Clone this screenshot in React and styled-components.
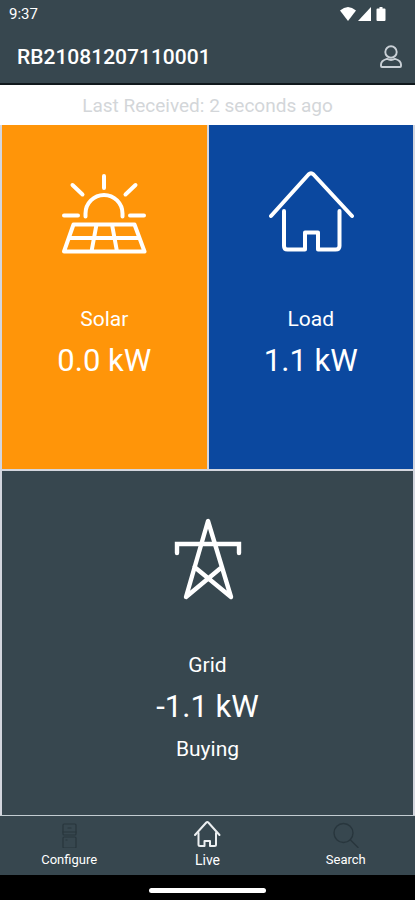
import React from "react";
import styled, { createGlobalStyle } from "styled-components";

const GlobalStyle = createGlobalStyle`
  * {
    box-sizing: border-box;
  }

  body {
    margin: 0;
    background: #ffffff;
    font-family: Roboto, "Liberation Sans", sans-serif;
  }
`;

const Screen = styled.div`
  display: flex;
  flex-direction: column;
  min-height: 100vh;
`;

const StatusBar = styled.div`
  display: flex;
  align-items: center;
  justify-content: space-between;
  height: 27px;
  padding: 0 27px 0 9px;
  background: #37474f;
  color: #ffffff;
  font-size: 15px;
`;

const StatusIcons = styled.div`
  display: flex;
  align-items: center;
  gap: 2px;
`;

const Header = styled.header`
  display: flex;
  align-items: center;
  justify-content: space-between;
  height: 58px;
  padding: 3px 12px 0 17px;
  border-bottom: 2px solid #10181c;
  background: #37474f;
`;

const Title = styled.h1`
  margin: 0;
  color: #ffffff;
  font-size: 21px;
  font-weight: 500;
  line-height: 28px;
`;

const IconButton = styled.button`
  display: flex;
  padding: 0;
  border: none;
  background: none;
  color: #c9d0d6;
  cursor: pointer;
`;

const LastReceived = styled.p`
  margin: 0;
  padding-top: 2px;
  color: #d3d6d9;
  font-size: 19px;
  line-height: 38px;
  text-align: center;
`;

const Tiles = styled.main`
  display: grid;
  flex: 1;
  grid-template-columns: 1fr 1fr;
  grid-template-rows: 1fr 1fr;
  gap: 2px;
  padding: 0 2px;
  background: #d3d6de;
`;

const TileBox = styled.section`
  display: flex;
  flex-direction: column;
  align-items: center;
  grid-column: ${(props) => (props.$wide ? "1 / -1" : "auto")};
  padding: 46px 0 32px;
  background: ${(props) => props.$color};
  color: #ffffff;
`;

const TileLabel = styled.h2`
  margin: 46px 0 0;
  font-size: 21px;
  font-weight: 400;
  line-height: 32px;
`;

const TileValue = styled.div`
  font-size: 31px;
  line-height: 52px;
`;

const TileNote = styled.div`
  font-size: 21px;
  line-height: 32px;
`;

const TabBar = styled.nav`
  display: grid;
  grid-template-columns: repeat(3, 1fr);
  height: 60px;
  border-top: 1px solid #c3cdd2;
  background: #37474f;
`;

const Tab = styled.a`
  display: flex;
  flex-direction: column;
  align-items: center;
  gap: 2px;
  padding-top: 4px;
  color: #ffffff;
  font-size: ${(props) => (props.$active ? "14px" : "13px")};
  line-height: 20px;
  text-decoration: none;

  svg {
    color: ${(props) => (props.$active ? "#eceff1" : "#28363d")};
  }
`;

const GestureBar = styled.div`
  display: flex;
  align-items: center;
  justify-content: center;
  height: 25px;
  padding-top: 5px;
  background: #000000;
`;

const GestureHandle = styled.div`
  width: 28%;
  height: 5px;
  border-radius: 3px;
  background: #ffffff;
`;

const Drawing = ({ size, box, stroke, children }) => (
  <svg
    width={size}
    height={size}
    viewBox={`0 0 ${box} ${box}`}
    fill="none"
    stroke="currentColor"
    strokeWidth={stroke}
    strokeLinecap="round"
    strokeLinejoin="round"
    aria-hidden="true"
  >
    {children}
  </svg>
);

const SolarIcon = () => (
  <Drawing size={86} box={86} stroke={4}>
    <path d="M43 5v12M11.500 14l10 9.500M74.500 14l-10 9.500M3 44.500h14M69 44.500h14" />
    <path d="M24.500 45.500v-3a18.500 18.500 0 0 1 37 0v3" />
    <path d="M12.500 53.500h61L83.500 80.500H3z M8 67h70M35.500 53.500l-5 27M51 53.500l5 27" />
  </Drawing>
);

const HouseIcon = () => (
  <Drawing size={86} box={86} stroke={4}>
    <path d="M3 45L40.500 3.500q2.500-2.500 5 0L84 45" />
    <path d="M16 40v35q0 3.500 3.500 3.500H37v-17h13v17h17.500q4 0 4-3.500V40" />
  </Drawing>
);

const PylonIcon = () => (
  <Drawing size={86} box={86} stroke={4.4}>
    <path d="M29.500 50L66 80 43 4 21 80 57 50" />
    <path d="M12 36V27h62v9" strokeLinejoin="miter" />
  </Drawing>
);

const UserIcon = () => (
  <Drawing size={24} box={24} stroke={1.9}>
    <circle cx="12" cy="7" r="5.700" />
    <path d="M2 21v-1.500c0-3 2.500-4.700 6-5.700 2.500 1.500 5.500 1.500 8 0 3.500 1 6 2.700 6 5.700V21q0 1-1 1H3q-1 0-1-1z" />
  </Drawing>
);

const InverterIcon = () => (
  <Drawing size={28} box={28} stroke={1.2}>
    <rect x="8" y="4" width="13" height="11" rx="1" />
    <rect x="8" y="17" width="13" height="11" rx="1" />
    <path d="M13 8h3M8 12h13M11 20h1" />
  </Drawing>
);

const LiveIcon = () => (
  <Drawing size={28} box={28} stroke={2}>
    <path d="M2 15L13.300 2.500q1-1 2 0L26.500 15" />
    <path d="M5.500 13v11.500q0 1.500 1.500 1.500h4.500v-5h5.500v5h4.500q1.500 0 1.500-1.500V13" />
  </Drawing>
);

const SearchIcon = () => (
  <Drawing size={28} box={28} stroke={1.4}>
    <circle cx="11.500" cy="13" r="9.500" />
    <path d="M18.500 20l7.500 7.500" />
  </Drawing>
);

function Tile({ color, icon, label, value, note, wide }) {
  return (
    <TileBox $color={color} $wide={wide}>
      {icon}
      <TileLabel>{label}</TileLabel>
      <TileValue>{value}</TileValue>
      {note && <TileNote>{note}</TileNote>}
    </TileBox>
  );
}

function App() {
  return (
    <Screen>
      <GlobalStyle />
      <StatusBar>
        <span>9:37</span>
        <StatusIcons>
          <svg width="16" height="14" viewBox="0 0 16 14" fill="#ffffff" aria-hidden="true">
            <path d="M0 3.500Q8-3.500 16 3.500L8 14z" />
          </svg>
          <svg width="14" height="14" viewBox="0 0 14 14" fill="#ffffff" aria-hidden="true">
            <path d="M0 14L13 0v14z" />
          </svg>
          <svg width="14" height="14" viewBox="0 0 14 14" fill="#ffffff" aria-hidden="true">
            <path d="M5.500 0h3v1.500h2q1 0 1 1V13q0 1-1 1h-7q-1 0-1-1V2.500q0-1 1-1h2z" />
          </svg>
        </StatusIcons>
      </StatusBar>
      <Header>
        <Title>RB21081207110001</Title>
        <IconButton type="button" aria-label="Account">
          <UserIcon />
        </IconButton>
      </Header>
      <LastReceived>Last Received: 2 seconds ago</LastReceived>
      <Tiles>
        <Tile color="#ff9509" icon={<SolarIcon />} label="Solar" value="0.0 kW" />
        <Tile color="#0b489f" icon={<HouseIcon />} label="Load" value="1.1 kW" />
        <Tile
          wide
          color="#37474f"
          icon={<PylonIcon />}
          label="Grid"
          value="-1.1 kW"
          note="Buying"
        />
      </Tiles>
      <TabBar>
        <Tab href="#configure">
          <InverterIcon />
          Configure
        </Tab>
        <Tab href="#live" $active aria-current="page">
          <LiveIcon />
          Live
        </Tab>
        <Tab href="#search">
          <SearchIcon />
          Search
        </Tab>
      </TabBar>
      <GestureBar>
        <GestureHandle />
      </GestureBar>
    </Screen>
  );
}

export default App;
